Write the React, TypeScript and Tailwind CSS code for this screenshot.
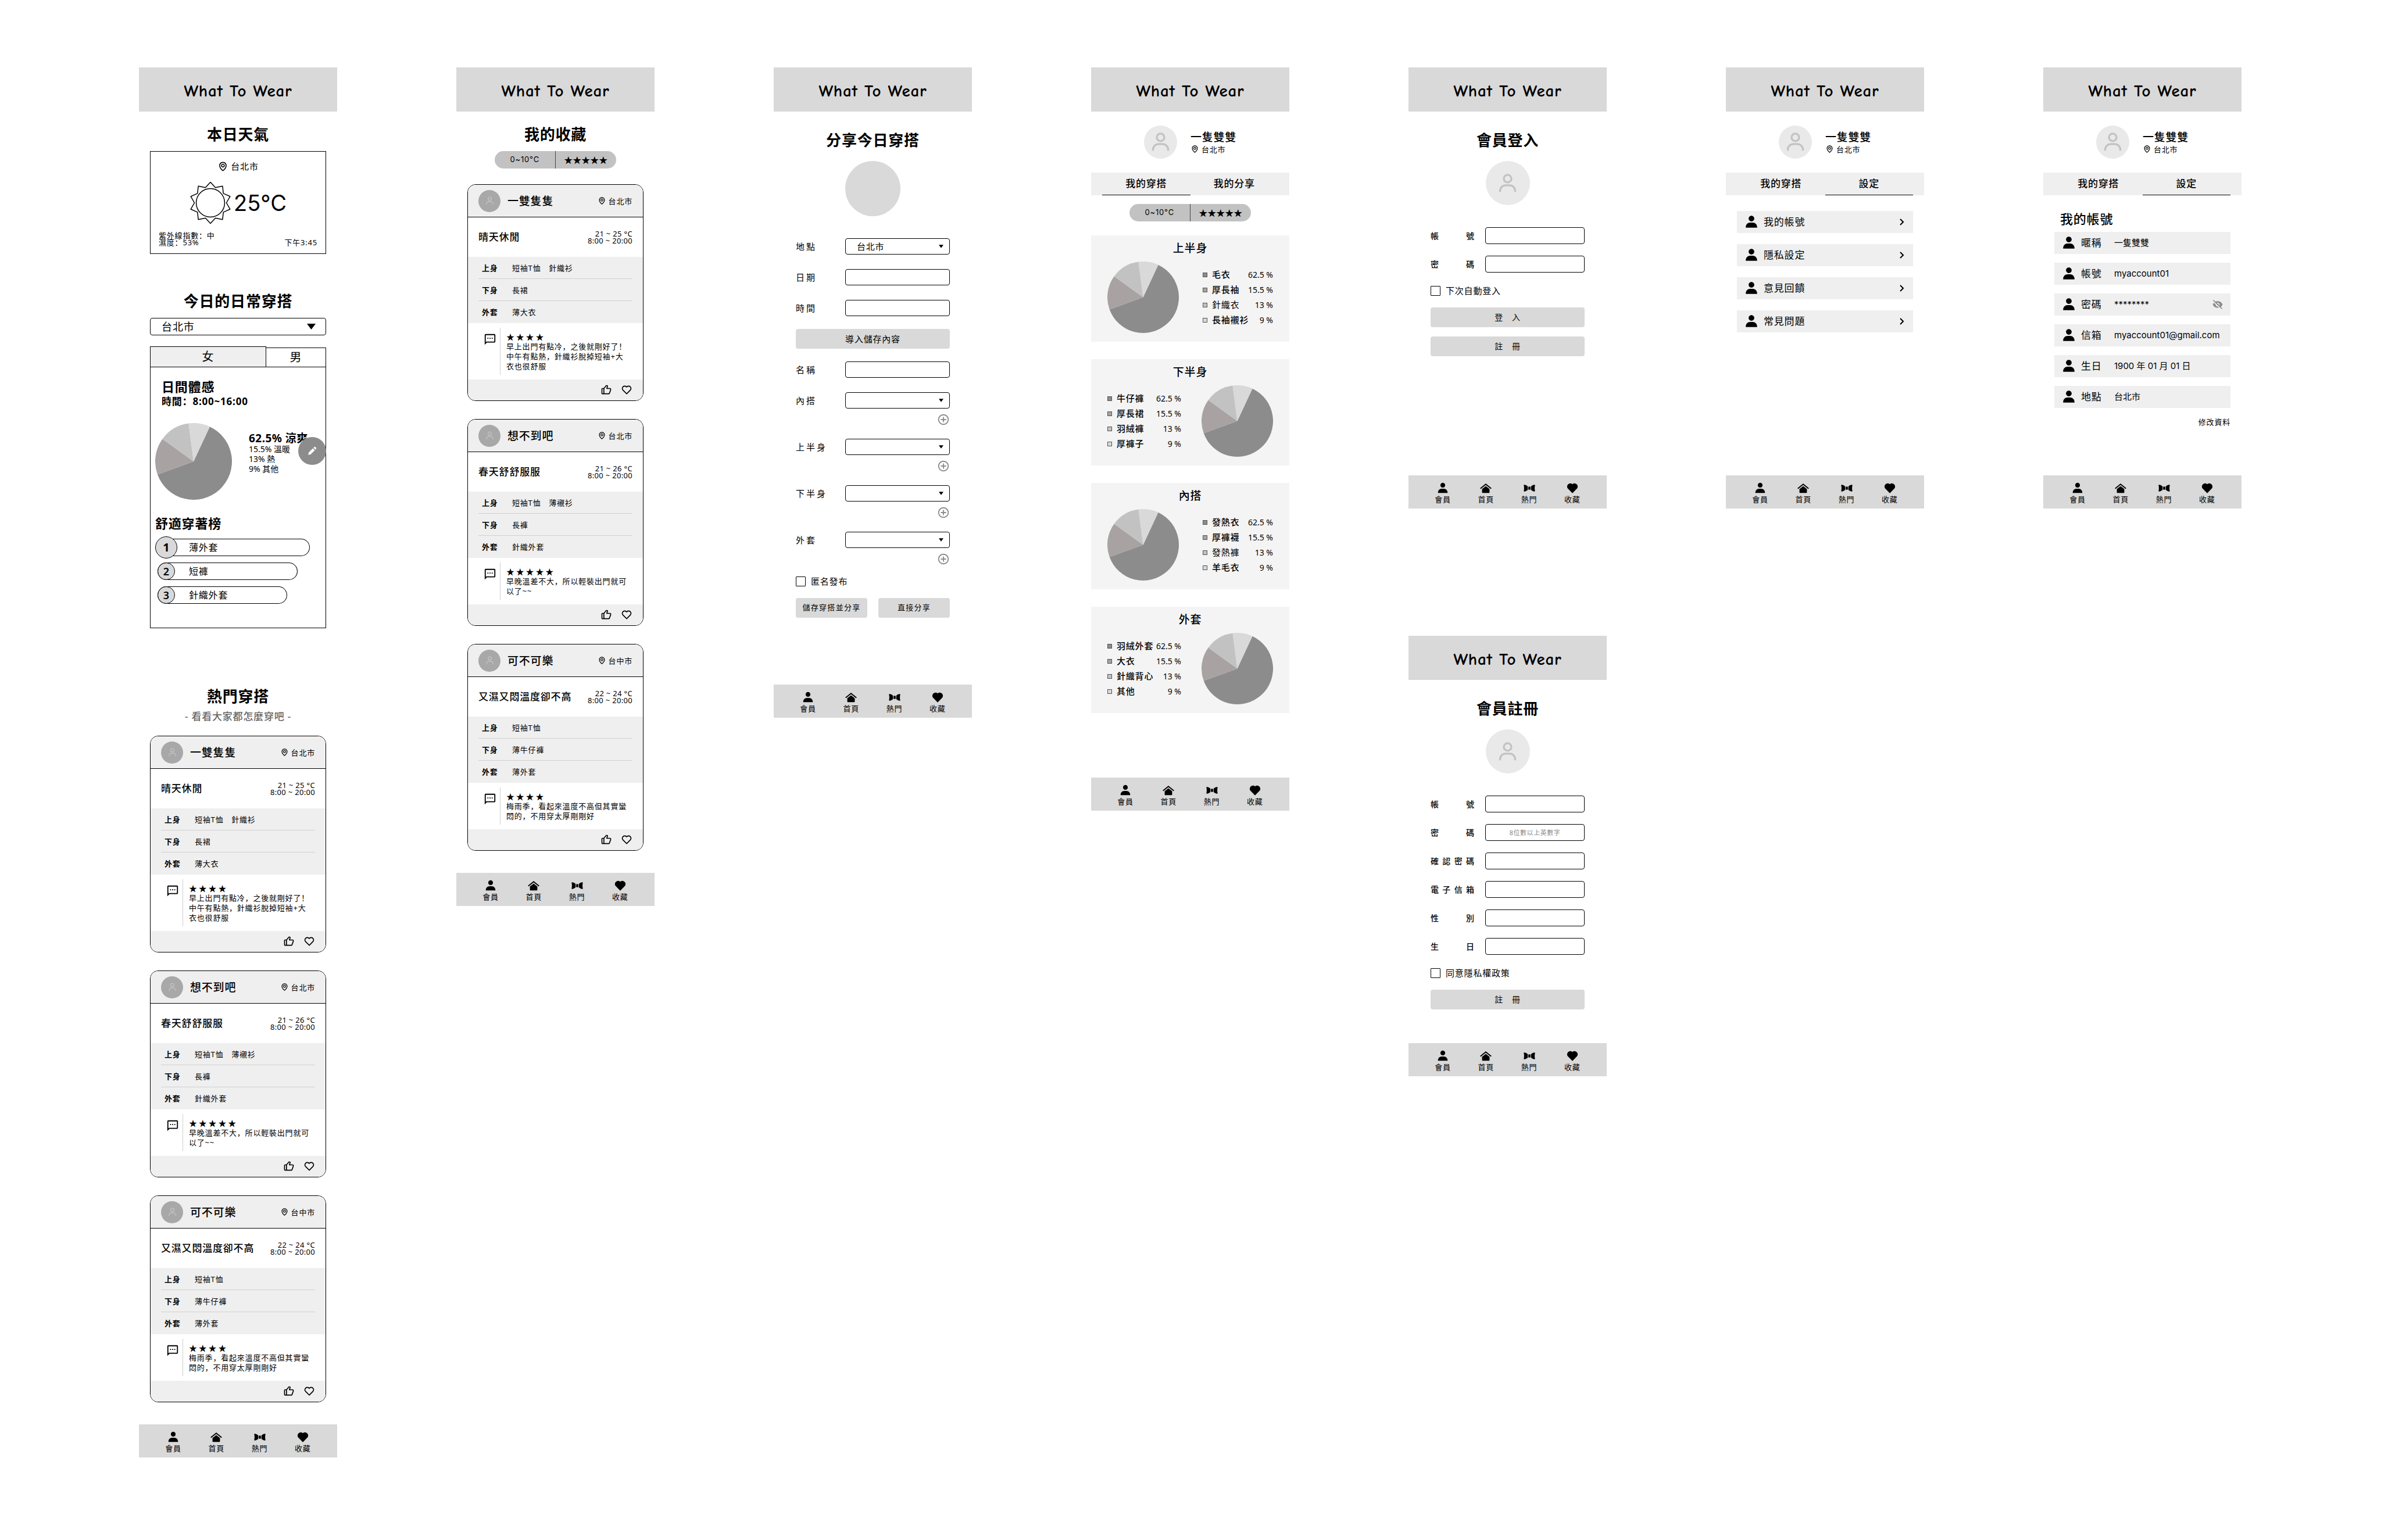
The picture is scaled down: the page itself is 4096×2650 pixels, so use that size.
import type { ReactNode } from "react";
import {
  BiChevronRight,
  BiHeart,
  BiLike,
  BiMap,
  BiPlusCircle,
  BiSolidHeart,
  BiSolidHide,
  BiSolidPencil,
  BiSolidUser,
  BiUser,
} from "react-icons/bi";
import { MdOutlineSms } from "react-icons/md";

const SHARES = [62.5, 15.5, 13, 9];
const SHARE_COLORS = ["#8c8c8c", "#a8a2a2", "#c2c2c2", "#d9d9d9"];

function Pie({ className }: { className: string }) {
  const point = (deg: number) => {
    const a = (deg * Math.PI) / 180;
    return `${50 + 50 * Math.sin(a)} ${50 - 50 * Math.cos(a)}`;
  };
  let angle = 25;
  return (
    <svg viewBox="0 0 100 100" className={className} aria-hidden="true">
      {SHARES.map((share, i) => {
        const start = angle;
        angle += share * 3.6;
        return (
          <path
            key={i}
            d={`M50 50 L${point(start)} A50 50 0 ${share > 50 ? 1 : 0} 1 ${point(angle)} Z`}
            fill={SHARE_COLORS[i]}
          />
        );
      })}
    </svg>
  );
}

function Sun() {
  const points = Array.from({ length: 20 }, (_, i) => {
    const a = (i * 18 * Math.PI) / 180;
    const r = i % 2 ? 27.5 : 35.5;
    return `${36 + r * Math.sin(a)},${36 - r * Math.cos(a)}`;
  }).join(" ");
  return (
    <svg viewBox="0 0 72 72" className="size-[72px]" fill="none" stroke="#000" strokeWidth="1.5" aria-hidden="true">
      <polygon points={points} strokeLinejoin="round" />
      <circle cx="36" cy="36" r="24.500" />
    </svg>
  );
}

function HomeIcon() {
  return (
    <svg viewBox="0 0 24 24" className="size-[22px]" aria-hidden="true">
      <path d="M2.5 12.2 12 4.6l9.500 7.600" fill="none" stroke="#000" strokeWidth="2" strokeLinecap="round" />
      <path d="M12 8.200 19 13.600V20a1 1 0 0 1-1 1H6a1 1 0 0 1-1-1v-6.400z" />
    </svg>
  );
}

function BowIcon() {
  return (
    <svg viewBox="0 0 24 24" className="size-[22px]" aria-hidden="true">
      <path d="M2.500 5.700C4.500 5.500 7 7 9 8.600v6.800C7 17 4.500 18.500 2.500 18.300c-.8 0-1.200-.5-1-1.300.8-3.200.8-6.800 0-10-.2-.8.200-1.300 1-1.300z" />
      <path d="M21.500 5.700C19.500 5.500 17 7 15 8.600v6.800c2 1.600 4.500 3.100 6.500 2.900.8 0 1.200-.5 1-1.300-.8-3.200-.8-6.800 0-10 .2-.8-.2-1.300-1-1.300z" />
      <rect x="10" y="9" width="4" height="6" rx="1.500" />
    </svg>
  );
}

function Triangle({ className }: { className: string }) {
  return (
    <svg viewBox="0 0 15 10" className={className} aria-hidden="true">
      <path d="M0 0h15L7.500 10z" />
    </svg>
  );
}

function Title({ children }: { children: ReactNode }) {
  return <h2 className="text-center text-[26px] leading-[30px] font-bold">{children}</h2>;
}

function Header() {
  return (
    <header className="flex h-[76px] items-center justify-center bg-[#d9d9d9] pt-1.5">
      <h1 className="font-['Comic_Neue','Comic_Sans_MS','Open_Sans',sans-serif] text-[29px] leading-8 font-semibold">
        What To Wear
      </h1>
    </header>
  );
}

function NavBar() {
  const items = [
    { label: "會員", icon: <BiSolidUser className="size-[22px]" /> },
    { label: "首頁", icon: <HomeIcon /> },
    { label: "熱門", icon: <BowIcon /> },
    { label: "收藏", icon: <BiSolidHeart className="size-[22px]" /> },
  ];
  return (
    <nav className="grid grid-cols-4 bg-[#d9d9d9] px-[22px] pt-[11px] pb-2">
      {items.map((item) => (
        <a key={item.label} href="#" className="flex flex-col items-center text-[13px] leading-4">
          {item.icon}
          {item.label}
        </a>
      ))}
    </nav>
  );
}

function Phone({ children }: { children: ReactNode }) {
  return (
    <section>
      <Header />
      {children}
      <NavBar />
    </section>
  );
}

function RangePill() {
  return (
    <div className="mx-auto grid h-[30px] w-[209px] grid-cols-2 overflow-hidden rounded-full bg-[#c2c2c2]">
      <button className="border-r border-[#444] font-['Inter',sans-serif] text-[13px]">0~10°C</button>
      <button className="text-[15px] tracking-normal">★★★★★</button>
    </div>
  );
}

type Outfit = {
  user: string;
  city: string;
  title: string;
  temp: string;
  rows: [string, string][];
  stars: string;
  comment: string;
};

const OUTFITS: Outfit[] = [
  {
    user: "一雙隻隻",
    city: "台北市",
    title: "晴天休閒",
    temp: "21 ~ 25 °C",
    rows: [
      ["上身", "短袖T恤　針織衫"],
      ["下身", "長裙"],
      ["外套", "薄大衣"],
    ],
    stars: "★★★★",
    comment: "早上出門有點冷，之後就剛好了！中午有點熱，針織衫脫掉短袖+大衣也很舒服",
  },
  {
    user: "想不到吧",
    city: "台北市",
    title: "春天舒舒服服",
    temp: "21 ~ 26 °C",
    rows: [
      ["上身", "短袖T恤　薄襯衫"],
      ["下身", "長褲"],
      ["外套", "針織外套"],
    ],
    stars: "★★★★★",
    comment: "早晚溫差不大，所以輕裝出門就可以了~~",
  },
  {
    user: "可不可樂",
    city: "台中市",
    title: "又濕又悶溫度卻不高",
    temp: "22 ~ 24 °C",
    rows: [
      ["上身", "短袖T恤"],
      ["下身", "薄牛仔褲"],
      ["外套", "薄外套"],
    ],
    stars: "★★★★",
    comment: "梅雨季，看起來溫度不高但其實蠻悶的，不用穿太厚剛剛好",
  },
];

function OutfitCard({ outfit }: { outfit: Outfit }) {
  return (
    <article className="overflow-hidden rounded-[14px] border border-black bg-white">
      <div className="flex h-14 items-center border-b border-black bg-[#efefef] px-[18px]">
        <span className="flex size-[38px] items-center justify-center rounded-full bg-[#a8a8a8]">
          <BiUser className="size-[17px] text-[#c2c2c2]" />
        </span>
        <h3 className="ml-3 text-[19px] leading-6 font-medium">{outfit.user}</h3>
        <span className="ml-auto flex items-center gap-1 text-[13px] leading-4">
          <BiMap className="size-[15px]" />
          {outfit.city}
        </span>
      </div>
      <div className="flex h-[68px] items-center justify-between px-[18px]">
        <h4 className="text-[17px] leading-5 font-medium">{outfit.title}</h4>
        <p className="text-right text-[13px] leading-3 tracking-wide">
          {outfit.temp}
          <br />
          8:00 ~ 20:00
        </p>
      </div>
      <dl className="divide-y divide-[#d0d0d0] bg-[#efefef] mx-0 px-[18px]">
        {outfit.rows.map(([label, value]) => (
          <div key={label} className="flex h-[38px] items-center px-1.5 text-[13px] leading-4">
            <dt className="w-[52px] font-bold">{label}</dt>
            <dd>{value}</dd>
          </div>
        ))}
      </dl>
      <div className="flex pl-[27px]">
        <MdOutlineSms className="mt-[17px] size-[22px]" />
        <div className="my-2 ml-1.5 border-l border-[#d0d0d0]" />
        <div className="w-[220px] pt-4 pb-3.5 pl-2.5">
          <p className="text-sm leading-4 tracking-[0.2em]">{outfit.stars}</p>
          <p className="text-[13px] leading-[17px]">{outfit.comment}</p>
        </div>
      </div>
      <div className="flex h-9 items-center justify-end gap-[15px] bg-[#efefef] px-[18px]">
        <button aria-label="讚">
          <BiLike className="size-5" />
        </button>
        <button aria-label="收藏">
          <BiHeart className="size-5" />
        </button>
      </div>
    </article>
  );
}

function OutfitList() {
  return (
    <div className="flex flex-col gap-[31px] px-[19px] pb-[38px]">
      {OUTFITS.map((o) => (
        <OutfitCard key={o.user} outfit={o} />
      ))}
    </div>
  );
}

const RANKING = [
  { name: "薄外套", width: 90.5 },
  { name: "短褲", width: 83.5 },
  { name: "針織外套", width: 77 },
];

function HomeScreen() {
  return (
    <Phone>
      <div className="mt-6 px-[19px]">
        <Title>本日天氣</Title>
        <div className="mt-3.5 border border-black px-3.5 pt-[15px] pb-[13px]">
          <p className="flex items-center justify-center gap-1 text-[15px] leading-5">
            <BiMap className="size-[19px]" />
            台北市
          </p>
          <div className="mt-[17px] flex items-center justify-center gap-1">
            <Sun />
            <span className="font-['Inter',sans-serif] text-[38px] leading-10 tracking-normal">25°C</span>
          </div>
          <div className="mt-3.5 flex items-end justify-between text-[13px] leading-3">
            <p>
              紫外線指數：中
              <br />
              濕度：53%
            </p>
            <p>下午3:45</p>
          </div>
        </div>
      </div>

      <div className="mt-[66px] px-[19px]">
        <Title>今日的日常穿搭</Title>
        <div className="relative mt-3.5">
          <select
            aria-label="城市"
            className="h-[30px] w-full appearance-none rounded border border-black bg-white pl-[19px] text-[18px] leading-6 tracking-wider"
          >
            <option>台北市</option>
          </select>
          <Triangle className="pointer-events-none absolute top-2.5 right-[18px] h-2.5 w-[15px]" />
        </div>
        <div className="mt-[19px] flex items-end text-xl leading-6">
          <button className="h-[35px] w-[66%] border-x border-t border-black bg-[#efefef]">女</button>
          <button className="h-[33px] flex-1 border-t border-r border-black">男</button>
        </div>
        <div className="border border-black pb-[41px]">
          <div className="px-[19px] pt-5">
            <h3 className="text-[22px] leading-[26px] font-bold">日間體感</h3>
            <p className="mt-0.5 text-[17px] leading-[22px] font-bold">時間：8:00~16:00</p>
          </div>
          <div className="relative mt-[26px] flex items-start gap-[29px] pl-2">
            <Pie className="size-[132px]" />
            <ul className="pt-4 text-sm leading-[17px] tracking-normal">
              <li className="text-[19px] leading-5 font-bold tracking-wide">62.5% 涼爽</li>
              <li>15.5% 溫暖</li>
              <li>13% 熱</li>
              <li>9% 其他</li>
            </ul>
            <button
              aria-label="編輯"
              className="absolute top-6 -right-px flex size-12 items-center justify-center rounded-full bg-[#8c8c8c]"
            >
              <BiSolidPencil className="size-[18px] text-white" />
            </button>
          </div>
          <h3 className="mt-[27px] pl-2 text-[22px] leading-[26px] font-bold">舒適穿著榜</h3>
          <ol className="mt-2.5 pl-3">
            {RANKING.map((item, i) => (
              <li key={item.name} className={i === 0 ? "flex h-[38px] items-center" : i === 1 ? "mt-[7px] flex" : "mt-[11px] flex"}>
                <div
                  className="flex h-[30px] items-center rounded-full ring-1 ring-black ring-inset"
                  style={{ width: `${item.width}%` }}
                >
                  <span className="flex w-[30px] shrink-0 justify-center">
                    <span
                      className={
                        i === 0
                          ? "flex size-[38px] shrink-0 items-center justify-center rounded-full border border-black bg-[#d9d9d9] text-xl font-bold tracking-normal"
                          : "flex size-[30px] shrink-0 items-center justify-center rounded-full border border-black bg-[#d9d9d9] text-lg font-semibold tracking-normal"
                      }
                    >
                      {i + 1}
                    </span>
                  </span>
                  <span className="ml-6 text-base leading-5">{item.name}</span>
                </div>
              </li>
            ))}
          </ol>
        </div>
      </div>

      <div className="mt-[102px] mb-[23px]">
        <Title>熱門穿搭</Title>
        <p className="mt-2.5 text-center text-[17px] leading-5 font-medium text-[#666]">- 看看大家都怎麼穿吧 -</p>
      </div>
      <OutfitList />
    </Phone>
  );
}

function FavoritesScreen() {
  return (
    <Phone>
      <div className="mt-6 mb-[27px] flex flex-col gap-3.5">
        <Title>我的收藏</Title>
        <RangePill />
      </div>
      <OutfitList />
    </Phone>
  );
}

function ShareField({ id, label, options }: { id: string; label: string; options?: string[] }) {
  return (
    <div className="flex items-center">
      <label htmlFor={id} className="w-[85px] text-[15px] leading-5 tracking-[0.2em]">
        {label}
      </label>
      {options ? (
        <div className="relative flex-1">
          <select
            id={id}
            className="block h-7 w-full appearance-none rounded border border-black bg-white pl-[19px] text-[15px] leading-5 tracking-wider"
          >
            {options.map((o) => (
              <option key={o}>{o}</option>
            ))}
          </select>
          <Triangle className="pointer-events-none absolute top-[11px] right-[11px] h-1.5 w-2" />
        </div>
      ) : (
        <input id={id} className="h-7 min-w-0 flex-1 rounded border border-black px-2" />
      )}
    </div>
  );
}

function CheckRow({ id, label }: { id: string; label: string }) {
  return (
    <div className="flex items-center gap-[9px]">
      <input id={id} type="checkbox" className="size-[17px] appearance-none rounded-[1px] border border-black bg-white" />
      <label htmlFor={id} className="text-[15px] leading-[17px]">
        {label}
      </label>
    </div>
  );
}

function ShareScreen() {
  return (
    <Phone>
      <div className="px-[38px] pt-[34px] pb-[115px]">
        <Title>分享今日穿搭</Title>
        <div className="mx-auto mt-[21px] size-[95px] rounded-full bg-[#d9d9d9]" />
        <div className="mt-[38px] flex flex-col gap-[25px]">
          <ShareField id="share-place" label="地點" options={["台北市"]} />
          <ShareField id="share-date" label="日期" />
          <ShareField id="share-time" label="時間" />
        </div>
        <button className="my-[22px] h-[34px] w-full rounded bg-[#d9d9d9] text-[15px]">導入儲存內容</button>
        <div className="flex flex-col gap-[25px]">
          <ShareField id="share-name" label="名稱" />
          {["內搭", "上半身", "下半身", "外套"].map((label) => (
            <div key={label}>
              <ShareField id={`share-${label}`} label={label} options={[""]} />
              <button aria-label={`新增${label}`} className="mt-2 ml-auto block h-[19px] text-[#8c8c8c]">
                <BiPlusCircle className="size-[22px]" />
              </button>
            </div>
          ))}
        </div>
        <div className="mt-[22px]">
          <CheckRow id="anonymous" label="匿名發布" />
        </div>
        <div className="mt-5 grid grid-cols-2 gap-[19px] text-[13px] tracking-widest">
          <button className="h-[34px] rounded bg-[#d9d9d9]">儲存穿搭並分享</button>
          <button className="h-[34px] rounded bg-[#d9d9d9]">直接分享</button>
        </div>
      </div>
    </Phone>
  );
}

function Profile() {
  return (
    <div className="my-6 flex items-center justify-center gap-[23px]">
      <span className="flex size-[57px] items-center justify-center rounded-full bg-[#e9e9e9]">
        <BiUser className="size-[39px] text-[#c2c2c2]" />
      </span>
      <div>
        <p className="text-[19px] leading-6 font-medium">一隻雙雙</p>
        <p className="flex items-center gap-1 text-[13px] leading-[18px]">
          <BiMap className="size-[15px]" />
          台北市
        </p>
      </div>
    </div>
  );
}

function Tabs({ tabs, active }: { tabs: string[]; active: number }) {
  return (
    <div className="grid h-[39px] grid-cols-2 bg-[#efefef] px-[19px] text-[17px] font-medium">
      {tabs.map((tab, i) => (
        <button key={tab} className={i === active ? "border-b border-black" : "border-b border-transparent"}>
          {tab}
        </button>
      ))}
    </div>
  );
}

const PARTS = [
  { title: "上半身", items: ["毛衣", "厚長袖", "針織衣", "長袖襯衫"] },
  { title: "下半身", items: ["牛仔褲", "厚長裙", "羽絨褲", "厚褲子"] },
  { title: "內搭", items: ["發熱衣", "厚褲襪", "發熱褲", "羊毛衣"] },
  { title: "外套", items: ["羽絨外套", "大衣", "針織背心", "其他"] },
];

function WardrobeScreen() {
  return (
    <Phone>
      <Profile />
      <Tabs tabs={["我的穿搭", "我的分享"]} active={0} />
      <div className="mt-[15px] mb-6">
        <RangePill />
      </div>
      <div className="flex flex-col gap-[30px] pb-[111px]">
        {PARTS.map((part, p) => (
          <section key={part.title} className="bg-[#f4f4f4] px-7 pt-2.5 pb-[15px]">
            <h3 className="text-center text-[19px] leading-6 font-medium">{part.title}</h3>
            <div className={p % 2 ? "mt-[11px] flex flex-row-reverse items-center justify-between" : "mt-[11px] flex items-center justify-between"}>
              <Pie className="size-[123px]" />
              <ul className={p % 2 ? "w-[127px]" : "w-[121px]"}>
                {part.items.map((item, i) => (
                  <li key={item} className="flex h-[26px] items-center text-[15px] whitespace-nowrap">
                    <span
                      className="mr-2 size-2 shrink-0 border border-[#555]"
                      style={{ backgroundColor: SHARE_COLORS[i] }}
                    />
                    <span className={i === 2 && p % 2 === 0 ? "font-normal" : "font-medium"}>{item}</span>
                    <span className="ml-auto text-sm tracking-normal">{SHARES[i]} %</span>
                  </li>
                ))}
              </ul>
            </div>
          </section>
        ))}
      </div>
    </Phone>
  );
}

type Field = { label: string; placeholder?: string; type?: string };

function MemberForm({ id, title, fields, check, actions }: { id: string; title: string; fields: Field[]; check: string; actions: string[] }) {
  return (
    <form className="px-[38px] pt-[34px]">
      <Title>{title}</Title>
      <span className="mx-auto mt-[21px] flex size-[76px] items-center justify-center rounded-full bg-[#e9e9e9]">
        <BiUser className="size-[39px] text-[#c2c2c2]" />
      </span>
      <div className="mt-[38px] flex flex-col gap-5">
        {fields.map((f) => (
          <div key={f.label} className="flex items-center gap-[19px]">
            <label
              htmlFor={`${id}-${f.label}`}
              className="w-[75px] text-sm leading-5 font-medium tracking-normal [text-align-last:justify] [text-justify:inter-character]"
            >
              {f.label}
            </label>
            <input
              id={`${id}-${f.label}`}
              type={f.type ?? "text"}
              placeholder={f.placeholder}
              className="h-[29px] min-w-0 flex-1 rounded border border-black px-2 text-center text-[11px] tracking-wider placeholder:text-[#888]"
            />
          </div>
        ))}
      </div>
      <div className="mt-[23px] mb-5">
        <CheckRow id={`${id}-check`} label={check} />
      </div>
      <div className="flex flex-col gap-4">
        {actions.map((a) => (
          <button key={a} type="button" className="h-[34px] rounded bg-[#d9d9d9] text-sm">
            {a}
          </button>
        ))}
      </div>
    </form>
  );
}

function SettingsScreen() {
  return (
    <Phone>
      <Profile />
      <Tabs tabs={["我的穿搭", "設定"]} active={1} />
      <ul className="mt-[27px] flex flex-col gap-[19px] px-[19px] pb-[246px]">
        {["我的帳號", "隱私設定", "意見回饋", "常見問題"].map((item) => (
          <li key={item}>
            <a href="#" className="flex h-[38px] items-center bg-[#efefef] pr-2 pl-3 text-[17px]">
              <BiSolidUser className="mr-2 size-[26px]" />
              {item}
              <BiChevronRight className="ml-auto size-6" />
            </a>
          </li>
        ))}
      </ul>
    </Phone>
  );
}

const ACCOUNT = [
  ["暱稱", "一隻雙雙"],
  ["帳號", "myaccount01"],
  ["密碼", "********"],
  ["信箱", "myaccount01@gmail.com"],
  ["生日", "1900 年 01 月 01 日"],
  ["地點", "台北市"],
];

function AccountScreen() {
  return (
    <Phone>
      <Profile />
      <Tabs tabs={["我的穿搭", "設定"]} active={1} />
      <div className="px-[19px] pt-[26px] pb-[83px]">
        <h2 className="pl-2.5 text-[22px] leading-7 font-medium">我的帳號</h2>
        <dl className="mt-[9px] flex flex-col gap-[15px]">
          {ACCOUNT.map(([label, value]) => (
            <div key={label} className="flex h-[38px] items-center bg-[#efefef] pr-3 pl-3">
              <BiSolidUser className="mr-2 size-[26px] shrink-0" />
              <dt className="w-[57px] shrink-0 text-[17px]">{label}</dt>
              <dd className="flex-1 font-['Inter','Noto_Sans_CJK_SC',sans-serif] text-[15px] whitespace-nowrap tracking-normal">
                {value}
              </dd>
              {label === "密碼" && (
                <button aria-label="顯示密碼" className="text-[#8c8c8c]">
                  <BiSolidHide className="size-5" />
                </button>
              )}
            </div>
          ))}
        </dl>
        <a href="#" className="mt-[15px] block text-right text-[13px] leading-[18px]">
          修改資料
        </a>
      </div>
    </Phone>
  );
}

export default function App() {
  return (
    <main className="grid min-h-screen grid-cols-7 items-start gap-x-[205px] bg-white pt-[116px] pr-[240px] pb-[140px] pl-[239px] font-['Noto_Sans','Noto_Sans_CJK_SC',sans-serif] tracking-wider text-black">
      <HomeScreen />
      <FavoritesScreen />
      <ShareScreen />
      <WardrobeScreen />
      <div className="flex flex-col gap-[219px]">
        <Phone>
          <MemberForm
            id="login"
            title="會員登入"
            fields={[{ label: "帳號" }, { label: "密碼", type: "password" }]}
            check="下次自動登入"
            actions={["登　入", "註　冊"]}
          />
          <div className="h-[205px]" />
        </Phone>
        <Phone>
          <MemberForm
            id="register"
            title="會員註冊"
            fields={[
              { label: "帳號" },
              { label: "密碼", type: "password", placeholder: "8位數以上英數字" },
              { label: "確認密碼", type: "password" },
              { label: "電子信箱", type: "email" },
              { label: "性別" },
              { label: "生日" },
            ]}
            check="同意隱私權政策"
            actions={["註　冊"]}
          />
          <div className="h-[58px]" />
        </Phone>
      </div>
      <SettingsScreen />
      <AccountScreen />
    </main>
  );
}
